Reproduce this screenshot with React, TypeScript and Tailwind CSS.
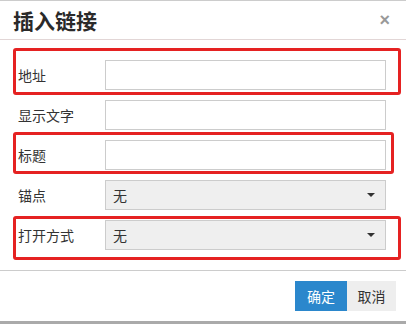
import React from "react"

const font = { fontFamily: '"Noto Sans CJK SC", "Microsoft YaHei", sans-serif' }

function TextRow({ label }: { label: string }) {
  return (
    <div className="flex items-center h-[30px]">
      <label className="w-[87px] text-[14px] text-[#333]">{label}</label>
      <input className="w-[281px] h-[30px] border border-[#ccc] bg-white outline-none" />
    </div>
  )
}

function SelectRow({ label }: { label: string }) {
  return (
    <div className="flex items-center h-[30px]">
      <label className="w-[87px] text-[14px] text-[#333]">{label}</label>
      <div className="w-[281px] h-[30px] border border-[#ccc] bg-[#efefef] flex items-center justify-between pl-[7px] pr-[10px]">
        <span className="text-[14px] text-[#333]">无</span>
        <span className="w-0 h-0 border-l-[4px] border-r-[4px] border-t-[4px] border-l-transparent border-r-transparent border-t-[#333]" />
      </div>
    </div>
  )
}

export default function App() {
  return (
    <div className="relative w-[406px] h-[324px] bg-white border-t border-[#ccc] overflow-hidden" style={font}>
      <div className="h-[39px] border-b border-[#e2d6d6] flex items-center justify-between pl-[13px] pr-[16px]">
        <h1 className="text-[21px] font-bold text-[#2a2a2a] leading-none">插入链接</h1>
        <span className="text-[18px] font-bold text-[#999] leading-none" style={{ fontFamily: '"Liberation Sans", sans-serif' }}>×</span>
      </div>

      <div className="pt-[20px] pb-[20px] pl-[18px] flex flex-col gap-[10px] border-b border-[#ccc]">
        <TextRow label="地址" />
        <TextRow label="显示文字" />
        <TextRow label="标题" />
        <SelectRow label="锚点" />
        <SelectRow label="打开方式" />
      </div>

      <div className="flex justify-end pt-[10px] pb-[10px] pr-[10px]">
        <button className="h-[30px] w-[52px] bg-[#2b87cc] text-white text-[14px]">确定</button>
        <button className="h-[30px] w-[49px] bg-[#eeeeee] text-[#333] text-[14px]">取消</button>
      </div>
      <div className="absolute left-0 right-0 bottom-0 h-[3px] bg-[#aaa]" />

      <div className="absolute left-[13px] top-[47px] w-[388px] h-[47px] border-[3px] border-[#e52222] rounded-[3px]" />
      <div className="absolute left-[13px] top-[131px] w-[381px] h-[42px] border-[3px] border-[#e52222] rounded-[3px]" />
      <div className="absolute left-[13px] top-[215px] w-[388px] h-[44px] border-[3px] border-[#e52222] rounded-[3px]" />
    </div>
  )
}
